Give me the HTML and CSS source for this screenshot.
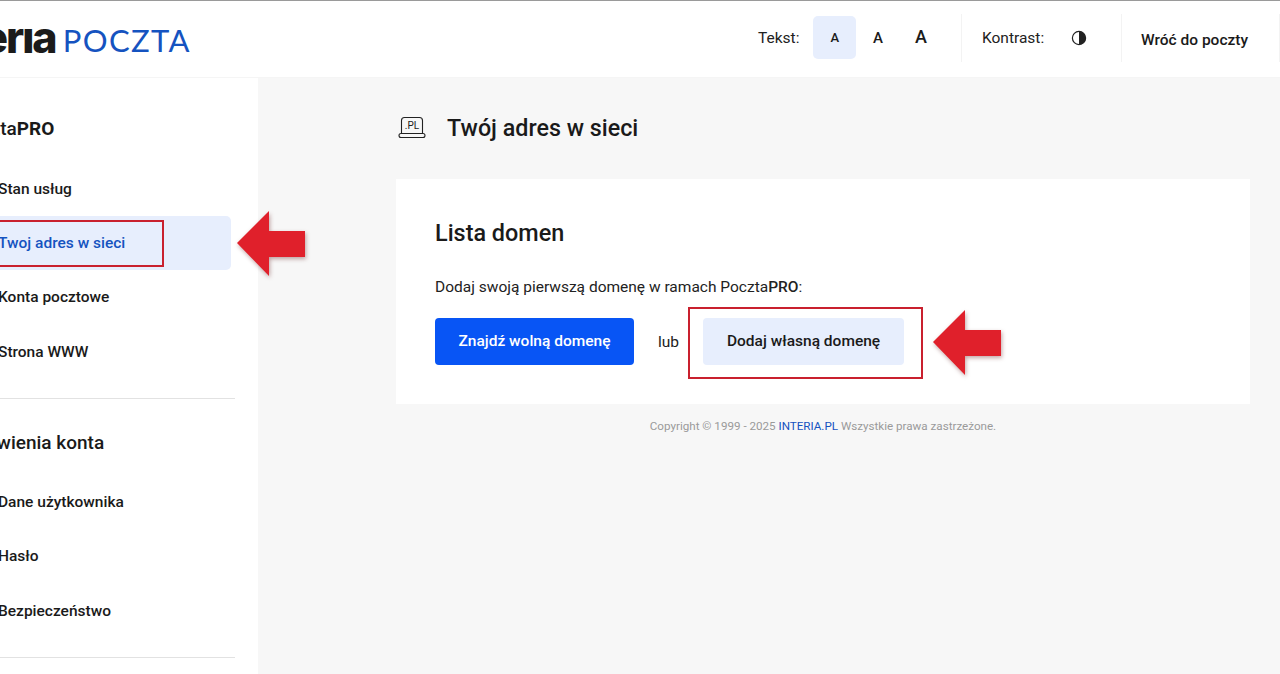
FILE: index.html
```html
<!DOCTYPE html>
<html lang="pl">
<head>
<meta charset="utf-8">
<title>Twój adres w sieci</title>
<link rel="stylesheet" href="styles.css">
</head>
<body>
<div class="page">
  <header class="header">
    <div class="logo"><span class="logo-mark">interıa</span><span class="logo-name">POCZTA</span></div>
    <div class="tools">
      <div class="tool tool-text">
        <span class="tool-label">Tekst:</span>
        <button class="size size-s is-on">A</button>
        <button class="size size-m">A</button>
        <button class="size size-l">A</button>
      </div>
      <div class="tool tool-contrast">
        <span class="tool-label">Kontrast:</span>
        <svg class="contrast-icon" width="16" height="16" viewBox="0 0 16 16"><circle cx="8" cy="8" r="6.6" fill="#fff" stroke="#222" stroke-width="1.2"/><path d="M8 1.4a6.6 6.6 0 0 1 0 13.2z" fill="#222"/></svg>
      </div>
      <a class="back">Wróć do poczty</a>
    </div>
  </header>
  <div class="body">
    <aside class="sidebar">
      <div class="side-inner">
        <section class="side-group">
          <h2 class="side-title">Poczta<b>PRO</b></h2>
          <a class="side-item">Stan usług</a>
          <a class="side-item is-active">Twoj adres w sieci</a>
          <a class="side-item">Konta pocztowe</a>
          <a class="side-item">Strona WWW</a>
        </section>
        <section class="side-group side-group-next">
          <h2 class="side-title">Ustawienia konta</h2>
          <a class="side-item">Dane użytkownika</a>
          <a class="side-item">Hasło</a>
          <a class="side-item">Bezpieczeństwo</a>
        </section>
      </div>
    </aside>
    <main class="main">
      <div class="page-head">
        <svg class="pl-icon" width="28" height="24" viewBox="0 0 28 24" fill="none" stroke="#222" stroke-width="1.1"><path d="M3.500 17V4.500a3 3 0 0 1 3-3h15a3 3 0 0 1 3 3V17"/><rect x="1" y="17.500" width="26" height="4" rx="2"/><text class="pl-text" x="14" y="13" text-anchor="middle">.PL</text></svg>
        <h1 class="page-title">Twój adres w sieci</h1>
      </div>
      <section class="card">
        <h2 class="card-title">Lista domen</h2>
        <p class="card-text">Dodaj swoją pierwszą domenę w ramach Poczta<b>PRO</b>:</p>
        <div class="actions">
          <a class="btn btn-primary">Znajdź wolną domenę</a>
          <span class="or">lub</span>
          <a class="btn btn-soft">Dodaj własną domenę</a>
        </div>
      </section>
      <p class="copy">Copyright © 1999 - 2025 <a class="copy-link">INTERIA.PL</a> Wszystkie prawa zastrzeżone.</p>
    </main>
  </div>
  <div class="mark mark-side"></div>
  <div class="mark mark-btn"></div>
  <svg class="arrow arrow-side" width="72" height="70" viewBox="0 0 72 70"><path d="M1 33 33 1V21H69V47H33V66Z" fill="#e0202b"/></svg>
  <svg class="arrow arrow-btn" width="72" height="70" viewBox="0 0 72 70"><path d="M1 33 33 1V21H69V47H33V66Z" fill="#e0202b"/></svg>
</div>
</body>
</html>
```
FILE: styles.css
```css
* { box-sizing: border-box; }
html, body { margin: 0; padding: 0; }
body { font-family: Roboto, "Liberation Sans", sans-serif; color: #1a1a1a; background: #f7f7f7; }
.page { position: relative; width: 1280px; height: 674px; overflow: hidden; border-top: 1px solid #9a9a9a; }

.header { height: 77px; background: #fff; display: flex; justify-content: space-between; align-items: center; border-bottom: 1px solid #f5f5f5; }
.logo { display: flex; align-items: center; width: 200px; justify-content: flex-end; padding-right: 9px; overflow: hidden; white-space: nowrap; height: 76px; flex: none; }
.logo-mark { font-family: Inter, sans-serif; font-weight: 800; font-size: 43px; letter-spacing: -2px; color: #1b1b1b; margin-right: 7px; flex: none; line-height: 1; position: relative; top: -2px; }
.logo-name { font-family: Lato, sans-serif; font-weight: 400; font-size: 31px; letter-spacing: 1.4px; color: #1553c0; flex: none; line-height: 1; position: relative; top: 1px; }

.tools { display: flex; align-items: center; height: 76px; }
.tool { display: flex; align-items: center; height: 48px; margin-top: -3px; border-right: 1px solid #f3f3f3; }
.tool-label { font-size: 15.500px; color: #222; }
.tool-text { width: 204px; }
.tool-contrast { width: 160px; padding-left: 20px; }
.size { width: 43px; height: 43px; border: 0; background: none; border-radius: 5px; font-family: Roboto, sans-serif; font-weight: 500; color: #1a1a1a; padding: 0; cursor: pointer; }
.size-s { margin-left: 14px; font-size: 13px; }
.size-m { font-size: 15px; }
.size-l { font-size: 18px; margin-top: -2px; }
.is-on { background: #e7eefd; }
.contrast-icon { margin-left: 27px; }
.back { display: block; width: 158px; padding-left: 19px; height: 48px; line-height: 53px; margin-top: -3px; font-size: 15.500px; font-weight: 500; color: #1a1a1a; border-right: 1px solid #f3f3f3; flex: none; }

.body { display: flex; height: 596px; }
.sidebar { width: 258px; flex: none; background: #fff; overflow: hidden; }
.side-inner { margin-left: -22px; width: 257px; }
.side-group { border-bottom: 1px solid #e2e2e2; padding-bottom: 19px; margin-bottom: 32px; }
.side-group:first-child { padding-top: 39px; }
.side-title { margin: 0 0 20.500px; font-size: 19px; font-weight: 500; line-height: 24px; color: #1a1a1a; text-indent: -20px; white-space: nowrap; }
.side-group-next .side-title { margin-bottom: 20px; }
.side-title b { font-weight: 700; }
.side-item { display: block; height: 54.400px; line-height: 54px; padding-left: 20px; font-size: 15.500px; font-weight: 500; color: #1a1a1a; border-radius: 5px; width: 253px; }
.is-active { background: #e7eefd; color: #1553c0; }

.main { flex: 1; padding: 26px 30px 0 138px; }
.page-head { display: flex; align-items: center; height: 48px; gap: 21px; }
.pl-icon { flex: none; margin-left: 2px; }
.pl-text { font-family: Roboto, sans-serif; font-size: 10px; fill: #222; stroke: none; }
.page-title { margin: 0; font-size: 23.300px; font-weight: 500; color: #1a1a1a; }
.card { margin-top: 27px; background: #fff; height: 225px; padding: 38px 39px; }
.card-title { margin: 0; font-size: 23.400px; font-weight: 500; line-height: 32px; }
.card-text { margin: 28px 0 0; font-size: 15.500px; line-height: 20px; color: #222; }
.card-text b { font-weight: 500; }
.actions { display: flex; align-items: center; margin-top: 21px; }
.btn { display: block; height: 47px; line-height: 47px; border-radius: 4px; text-align: center; font-size: 15.500px; font-weight: 500; }
.btn-primary { width: 199px; background: #0855f5; color: #fff; }
.or { margin: 0 24px; font-size: 15.500px; color: #222; }
.btn-soft { width: 201px; background: #e7eefd; color: #1a1a1a; }
.copy { margin: 14px 0 0; text-align: center; font-size: 11.630px; line-height: 16px; color: #9a9a9a; }
.copy-link { color: #1553c0; }

.mark { position: absolute; border: 2px solid #c9202e; }
.mark-side { left: -4px; top: 219px; width: 168px; height: 47px; }
.mark-btn { left: 688px; top: 306px; width: 235px; height: 72px; }
.arrow { position: absolute; filter: drop-shadow(1px 2px 2px rgba(80,0,0,.35)); }
.arrow-side { left: 236px; top: 209px; }
.arrow-btn { left: 932px; top: 308px; }
```
